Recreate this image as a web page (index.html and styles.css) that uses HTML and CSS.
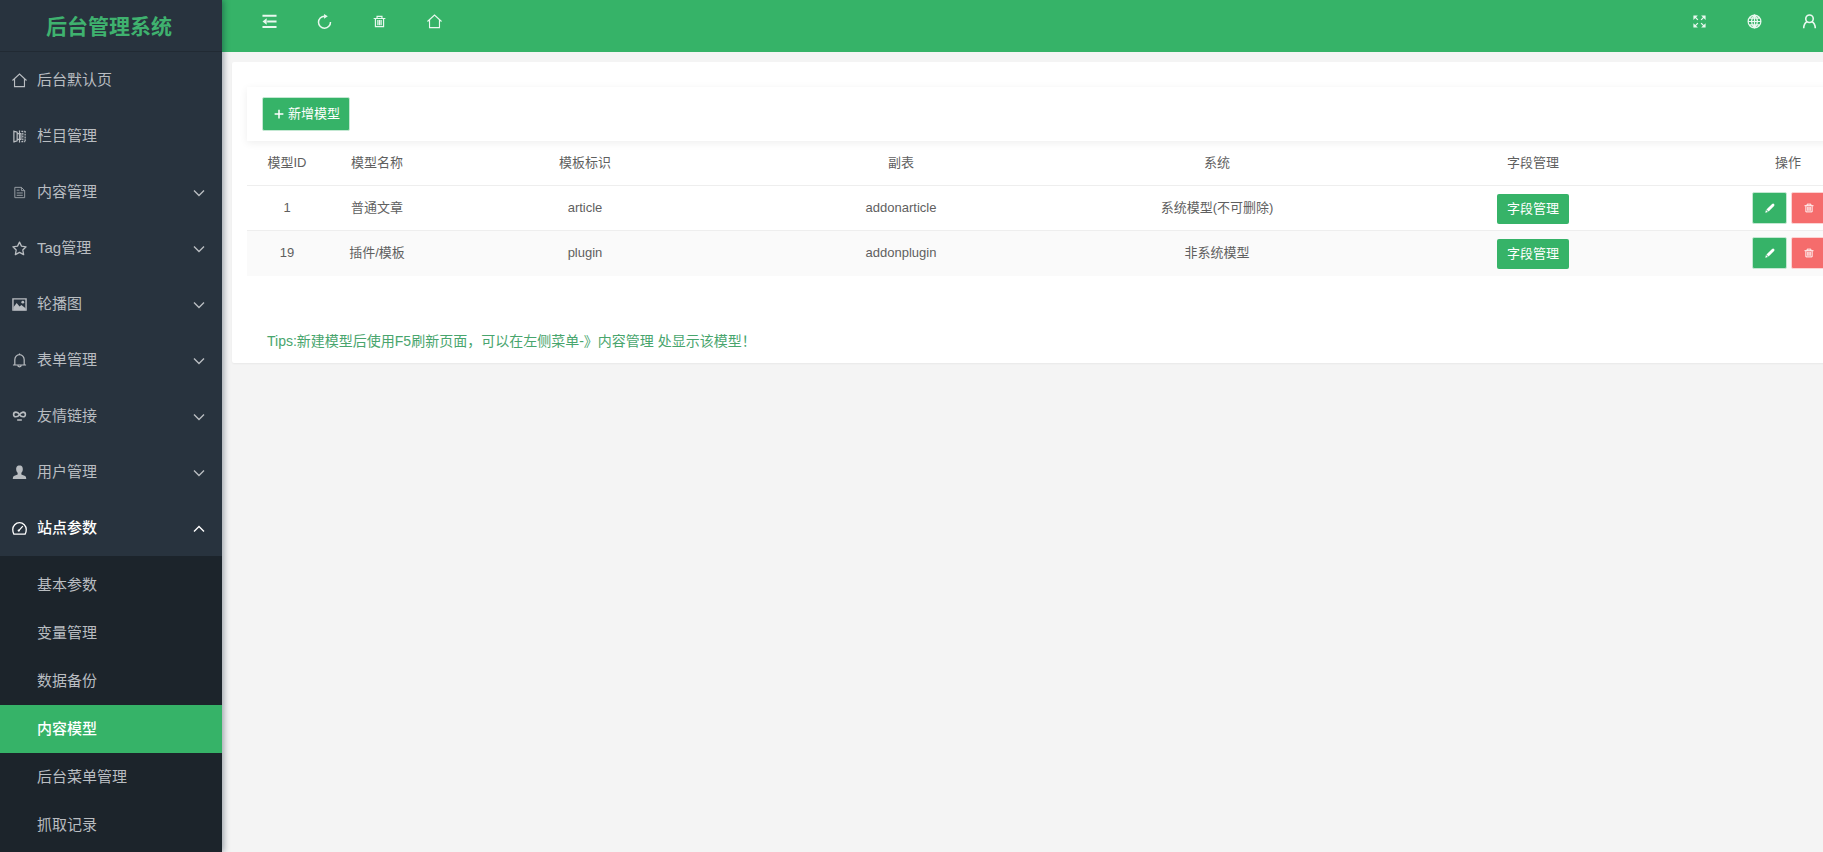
FILE: index.html
```html
<!DOCTYPE html>
<html lang="zh-CN">
<head>
<meta charset="utf-8">
<title>后台管理系统</title>
<link rel="stylesheet" href="styles.css">
</head>
<body>
<svg class="sprite" aria-hidden="true">
  <symbol id="home" viewBox="0 0 16 16"><path d="M.5 8 8 1.200 15.500 8M2.700 6.500V14.500H13.300V6.500" fill="none" stroke="currentColor" stroke-width="1.200"/></symbol>
  <symbol id="columns" viewBox="0 0 16 16"><path d="M2 1.500v13M2 2.200 5.500 3.500V12.500L2 13.800M5.500 5h4v6h-4" fill="none" stroke="currentColor" stroke-width="1.300"/><path d="M8 1.500v13" fill="none" stroke="currentColor" stroke-width="1.300"/><path d="M14 2v12M10 2.500h4M10 13.500h4M11.500 4v8" fill="none" stroke="currentColor" stroke-width="1.300" stroke-dasharray="2 1"/></symbol>
  <symbol id="file" viewBox="0 0 16 16"><path d="M3 2.500H10L13.500 6V13.500H3zM10 2.500V6H13.500M5 5.500h3M5 8.500h6.500M5 11h6.500" fill="none" stroke="currentColor"/></symbol>
  <symbol id="star" viewBox="0 0 16 16"><path d="M8 1.200 10.100 5.500 15 6.200 11.500 9.600 12.400 14.500 8 12.200 3.600 14.500 4.500 9.600 1 6.200 5.900 5.500z" fill="none" stroke="currentColor" stroke-width="1.400" stroke-linejoin="round"/></symbol>
  <symbol id="image" viewBox="0 0 16 16"><path d="M1 2H15V14H1z" fill="none" stroke="currentColor" stroke-width="1.500"/><path d="M1.500 13V11L5 6.500 8 10 10 8.500 14.500 12V14H2z" fill="currentColor"/><circle cx="11.500" cy="5.500" r="1.500" fill="currentColor"/></symbol>
  <symbol id="bell" viewBox="0 0 16 16"><path d="M1 12.800H15M3 12.500V7.300a5 5.500 0 0 1 10 0V12.500M6 13.500Q8 16 10 13.500M8 .5V2" fill="none" stroke="currentColor" stroke-width="1.300"/></symbol>
  <symbol id="link" viewBox="0 0 16 16"><path d="M8 6Q6.500 3.300 4.200 3.300a2.500 2.500 0 0 0 0 5Q6.500 8.300 8 6T11.800 3.300a2.500 2.500 0 0 1 0 5Q9.500 8.300 8 6zM5.500 11.700H10.500" fill="none" stroke="currentColor" stroke-width="1.700"/></symbol>
  <symbol id="user" viewBox="0 0 16 16"><path d="M8 .5C5 .5 4.300 2.800 4.500 5c.1 1.500.7 2.500 1.500 3.300V10L2 11.700Q.8 12.300.8 15H15.200Q15.200 12.300 14 11.700L10 10V8.300C10.800 7.500 11.400 6.500 11.500 5 11.700 2.800 11 .5 8 .5z" fill="currentColor"/></symbol>
  <symbol id="gauge" viewBox="0 0 16 16"><path d="M2 14Q.8 12 .8 9a7.200 7.200 0 0 1 14.400 0Q15.200 12 14 14zM7 10.500 11.500 5.500" fill="none" stroke="currentColor" stroke-width="1.400"/><circle cx="7.200" cy="10.200" r="1.200" fill="currentColor"/></symbol>
  <symbol id="down" viewBox="0 0 12 12"><path d="M1 3.500 6 8.500 11 3.500" fill="none" stroke="currentColor" stroke-width="1.400"/></symbol>
  <symbol id="up" viewBox="0 0 12 12"><path d="M1 8.500 6 3.500 11 8.500" fill="none" stroke="currentColor" stroke-width="1.400"/></symbol>
  <symbol id="fold" viewBox="0 0 16 16"><path d="M0.500 1.800H15.500M5.500 8H15.500M0.500 13.800H15.500" fill="none" stroke="currentColor" stroke-width="2.200"/><path d="M.5 8 5 4.500V11.500z" fill="currentColor"/></symbol>
  <symbol id="refresh" viewBox="0 0 16 16"><path d="M8 2.300A6.400 6.400 0 1 0 14.400 8.500" fill="none" stroke="currentColor" stroke-width="1.600"/><path d="M7.500 0 11.500 2.500 7.500 5z" fill="currentColor"/></symbol>
  <symbol id="trash" viewBox="0 0 16 16"><path d="M.8 4.300H15.200M5 4V1.800H11V4M3 5V14.200H13V5M6 6V12.500M8 6V12.500M10 6V12.500" fill="none" stroke="currentColor" stroke-width="1.500"/></symbol>
  <symbol id="expand" viewBox="0 0 16 16"><path d="M2 2 6 6M14 2 10 6M2 14 6 10M14 14 10 10" fill="none" stroke="currentColor" stroke-width="1.600"/><path d="M.5.5H6L.5 6zM15.500.5V6L10 .5zM.5 15.500V10L6 15.500zM15.500 15.500H10L15.500 10z" fill="currentColor"/></symbol>
  <symbol id="globe" viewBox="0 0 16 16"><path d="M8 1.200a6.800 6.800 0 1 0 0 13.600A6.800 6.800 0 1 0 8 1.200zM8 1V15M1 8H15M2.500 4.500H13.500M2.500 11.500H13.500M8 1Q1.500 8 8 15Q14.500 8 8 1" fill="none" stroke="currentColor" stroke-width="1.300"/></symbol>
  <symbol id="person" viewBox="0 0 16 16"><circle cx="8" cy="5" r="4" fill="none" stroke="currentColor" stroke-width="1.700"/><path d="M5.500 8Q2 10 1.800 15.300M10.500 8Q14 10 14.200 15.300" fill="none" stroke="currentColor" stroke-width="1.700"/></symbol>
  <symbol id="pencil" viewBox="0 0 16 16"><path d="M.5 15.500 1.500 11.300 4.700 14.500zM2.300 10.300 11.300 1.500Q13 .2 14.500 1.500 15.800 3 14.500 4.700L5.700 13.700z" fill="currentColor"/></symbol>
  <symbol id="plus" viewBox="0 0 16 16"><path d="M8 1V15M1 8H15" fill="none" stroke="currentColor" stroke-width="2.400"/></symbol>
</svg>
<div class="app">
  <aside class="sidebar">
    <h1 class="logo">后台管理系统</h1>
    <nav class="menu">
      <a class="item" href="#"><svg class="icon"><use href="#home"/></svg><span class="label">后台默认页</span></a>
      <a class="item" href="#"><svg class="icon"><use href="#columns"/></svg><span class="label">栏目管理</span></a>
      <button class="item" type="button"><svg class="icon icon-dim"><use href="#file"/></svg><span class="label">内容管理</span><svg class="arrow"><use href="#down"/></svg></button>
      <button class="item" type="button"><svg class="icon"><use href="#star"/></svg><span class="label">Tag管理</span><svg class="arrow"><use href="#down"/></svg></button>
      <button class="item" type="button"><svg class="icon"><use href="#image"/></svg><span class="label">轮播图</span><svg class="arrow"><use href="#down"/></svg></button>
      <button class="item" type="button"><svg class="icon"><use href="#bell"/></svg><span class="label">表单管理</span><svg class="arrow"><use href="#down"/></svg></button>
      <button class="item" type="button"><svg class="icon"><use href="#link"/></svg><span class="label">友情链接</span><svg class="arrow"><use href="#down"/></svg></button>
      <button class="item" type="button"><svg class="icon"><use href="#user"/></svg><span class="label">用户管理</span><svg class="arrow"><use href="#down"/></svg></button>
      <button class="item open" type="button" aria-expanded="true"><svg class="icon"><use href="#gauge"/></svg><span class="label">站点参数</span><svg class="arrow"><use href="#up"/></svg></button>
      <div class="submenu">
        <a class="subitem" href="#">基本参数</a>
        <a class="subitem" href="#">变量管理</a>
        <a class="subitem" href="#">数据备份</a>
        <a class="subitem active" href="#" aria-current="page">内容模型</a>
        <a class="subitem" href="#">后台菜单管理</a>
        <a class="subitem" href="#">抓取记录</a>
      </div>
    </nav>
  </aside>
  <div class="main">
    <header class="topbar">
      <div class="tools">
        <button class="tool" type="button" aria-label="收起菜单"><svg class="icon"><use href="#fold"/></svg></button>
        <button class="tool" type="button" aria-label="刷新"><svg class="icon"><use href="#refresh"/></svg></button>
        <button class="tool" type="button" aria-label="清除缓存"><svg class="icon icon-small"><use href="#trash"/></svg></button>
        <a class="tool" href="#" aria-label="首页"><svg class="icon"><use href="#home"/></svg></a>
      </div>
      <div class="tools">
        <button class="tool" type="button" aria-label="全屏"><svg class="icon icon-small"><use href="#expand"/></svg></button>
        <a class="tool" href="#" aria-label="网站"><svg class="icon"><use href="#globe"/></svg></a>
        <button class="tool" type="button" aria-label="用户"><svg class="icon"><use href="#person"/></svg></button>
      </div>
    </header>
    <main class="card">
      <div class="toolbar">
        <button class="btn btn-add" type="button"><svg class="plus"><use href="#plus"/></svg>新增模型</button>
      </div>
      <table class="models">
        <colgroup><col class="col-id"><col class="col-name"><col><col><col><col><col class="col-actions"></colgroup>
        <thead>
          <tr><th>模型ID</th><th>模型名称</th><th>模板标识</th><th>副表</th><th>系统</th><th>字段管理</th><th>操作</th></tr>
        </thead>
        <tbody>
          <tr>
            <td>1</td><td>普通文章</td><td>article</td><td>addonarticle</td><td>系统模型(不可删除)</td>
            <td class="cell-field"><button class="btn btn-field" type="button">字段管理</button></td>
            <td><div class="actions"><button class="btn btn-icon" type="button" aria-label="编辑"><svg class="glyph"><use href="#pencil"/></svg></button><button class="btn btn-icon btn-danger" type="button" aria-label="删除"><svg class="glyph"><use href="#trash"/></svg></button></div></td>
          </tr>
          <tr>
            <td>19</td><td>插件/模板</td><td>plugin</td><td>addonplugin</td><td>非系统模型</td>
            <td class="cell-field"><button class="btn btn-field" type="button">字段管理</button></td>
            <td><div class="actions"><button class="btn btn-icon" type="button" aria-label="编辑"><svg class="glyph"><use href="#pencil"/></svg></button><button class="btn btn-icon btn-danger" type="button" aria-label="删除"><svg class="glyph"><use href="#trash"/></svg></button></div></td>
          </tr>
        </tbody>
      </table>
      <p class="tips">Tips:新建模型后使用F5刷新页面，可以在左侧菜单-》内容管理 处显示该模型！</p>
    </main>
  </div>
</div>
</body>
</html>
```
FILE: styles.css
```css
:root {
  --green: #36b368;
  --red: #f56c6c;
  --side: #28333e;
  --side-dark: #1c242b;
}

* { box-sizing: border-box; }

body {
  margin: 0;
  overflow: hidden;
  background: #f4f4f4;
  color: #5f5f5f;
  font: 13px/20px "Liberation Sans", "Noto Sans CJK SC", sans-serif;
}

button {
  border: 0;
  background: none;
  font: inherit;
  color: inherit;
  cursor: pointer;
}

a { color: inherit; text-decoration: none; }

.sprite { display: none; }

/* The workspace is wider than the window and runs off its right side */
.app {
  display: flex;
  width: calc(100% + 87px);
  height: 100vh;
}

/* Sidebar */
.sidebar {
  z-index: 1;
  flex: none;
  width: 222px;
  background: var(--side);
  box-shadow: 2px 0 6px rgba(0, 21, 41, .35);
  overflow: hidden;
}

.logo {
  height: 52px;
  margin: 0;
  padding-right: 4px;
  border-bottom: 1px solid #212a33;
  color: #3fb26f;
  font-size: 21px;
  line-height: 54px;
  text-align: center;
}

.menu { color: #b9bdc1; font-size: 15px; }

.item {
  display: flex;
  align-items: center;
  width: 100%;
  height: 56px;
  padding: 0 17px 0 12px;
  text-align: left;
}

.item .label { flex: 1; padding-left: 10px; }

.icon { flex: none; width: 15px; height: 15px; }
.icon-small { width: 13px; height: 13px; }
.icon-dim { opacity: .8; }
.arrow { width: 12px; height: 12px; margin-top: 2px; }

.open { color: #fff; font-weight: 500; }

.submenu { padding: 5px 0; background: var(--side-dark); }

.subitem {
  display: block;
  padding-left: 37px;
  line-height: 48px;
}

.subitem.active { background: var(--green); color: #fff; font-weight: 500; }

/* Main column */
.main { flex: 1; min-width: 0; }

.topbar {
  display: flex;
  justify-content: space-between;
  height: 52px;
  padding: 0 73px 10px 20px;
  background: var(--green);
  color: #e9f8ef;
}

.tools { display: flex; }

.tool {
  display: flex;
  align-items: center;
  justify-content: center;
  width: 55px;
  padding: 0;
}

.card {
  margin: 10px;
  padding: 25px 15px 12px;
  border-radius: 2px;
  background: #fff;
  box-shadow: 0 1px 2px rgba(0, 0, 0, .05);
}

.toolbar {
  height: 54px;
  padding: 10px 15px;
  box-shadow: 0 2px 8px rgba(0, 0, 0, .07);
}

.btn {
  display: inline-flex;
  align-items: center;
  justify-content: center;
  border-radius: 2px;
  background: var(--green);
  color: #fff;
}

.btn-add {
  gap: 4px;
  height: 34px;
  padding: 0 9px 0 11px;
  border: 1px solid #c3e8d2;
}

.plus { width: 10px; height: 10px; }

.models {
  width: 100%;
  border-collapse: collapse;
  table-layout: fixed;
  text-align: center;
}

.col-id { width: 80px; }
.col-name { width: 100px; }
.col-actions { width: 194px; }

.models th,
.models td {
  height: 45px;
  padding: 0;
  font-weight: 400;
}

.models th { height: 44px; }

.models tr { border-bottom: 1px solid #eee; }
.models tbody tr:last-child { border-bottom-color: #fafafa; }
.models tbody tr:nth-child(2) { background: #fafafa; }

.btn-field { height: 30px; padding: 0 10px; vertical-align: middle; }
.models .cell-field { padding-top: 3px; }

.actions { display: flex; justify-content: center; gap: 4px; padding-left: 2px; }

.btn-icon {
  width: 35px;
  height: 32px;
  padding: 0;
  border: 1px solid #c3e8d2;
}

.btn-danger { border-color: #fcd3d3; background: var(--red); }

.glyph { width: 10px; height: 10px; }

.tips {
  margin: 55px 0 0 20px;
  color: #48a56d;
  font-size: 14px;
}
```
